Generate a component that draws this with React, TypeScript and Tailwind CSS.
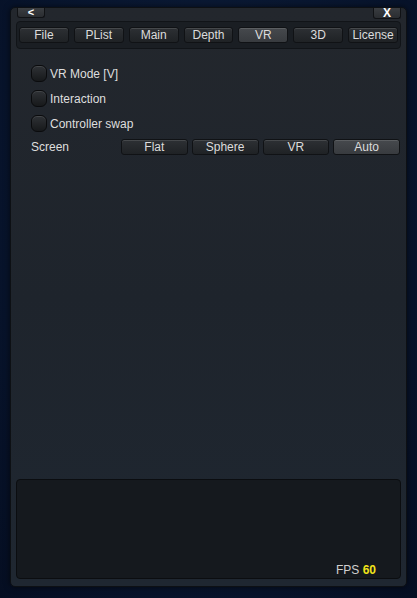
import React from 'react';

const tabs = ['File', 'PList', 'Main', 'Depth', 'VR', '3D', 'License'];
const screens = ['Flat', 'Sphere', 'VR', 'Auto'];
const toggles = ['VR Mode [V]', 'Interaction', 'Controller swap'];

function Btn({ label, active, className = '' }: { label: string; active?: boolean; className?: string }) {
    return (
        <div
            className={`flex items-center justify-center rounded-[3px] border border-[#101215] text-[12px] leading-none text-[#dcdcdc] shadow-[inset_0_1px_0_rgba(255,255,255,0.12)] ${
                active
                    ? 'bg-gradient-to-b from-[#46494d] to-[#383b3f]'
                    : 'bg-gradient-to-b from-[#2d3034] to-[#1f2225]'
            } ${className}`}
        >
            {label}
        </div>
    );
}

export default function App() {
    return (
        <div className="w-[417px] h-[598px] overflow-hidden bg-[radial-gradient(ellipse_at_50%_30%,#0c1c38_0%,#08152e_60%,#050e22_100%)] pt-[7px] pl-[10px] font-['Liberation_Sans',Arial,sans-serif]">
            <div className="w-[397px] h-[580px] flex flex-col rounded-[5px] border border-[#0d1014] bg-gradient-to-b from-[#23272d] via-[#1e242c] to-[#1f2731] shadow-[0_0_6px_rgba(0,0,0,0.6)]">
                {/* header */}
                <div className="flex justify-between h-[13px] pl-[6px] pr-[5px]">
                    <div className="w-[28px] h-[10px] flex items-center justify-center rounded-b-[3px] border border-t-0 border-[#101215] bg-gradient-to-b from-[#3a3d41] to-[#2a2d31] text-[11px] font-bold leading-none text-white">
                        &lt;
                    </div>
                    <div className="w-[28px] h-[11px] flex items-center justify-center rounded-b-[3px] border border-t-0 border-[#101215] bg-gradient-to-b from-[#3a3d41] to-[#2a2d31] text-[12px] font-bold leading-none text-white">
                        X
                    </div>
                </div>

                {/* tab bar */}
                <div className="mx-[5px] h-[28px] flex gap-[5px] items-start pt-[5px] px-[2px] rounded-[4px] border border-[#111418] bg-[#1a1e23]">
                    {tabs.map((t) => (
                        <Btn key={t} label={t} active={t === 'VR'} className="w-[50px] h-[16px]" />
                    ))}
                </div>

                {/* options */}
                <div className="flex flex-col pl-[20px] pr-[6px] pt-[12px]">
                    {toggles.map((t) => (
                        <div key={t} className="flex items-center h-[25px]">
                            <div className="w-[16px] h-[17px] rounded-[6px] border border-[#0a0b0d] bg-gradient-to-b from-[#2f3236] to-[#17191b] shadow-[inset_0_1px_0_rgba(255,255,255,0.1)]" />
                            <span className="ml-[3px] text-[12px] text-[#dedede]">{t}</span>
                        </div>
                    ))}
                    <div className="flex items-center h-[22px]">
                        <span className="w-[90px] text-[12px] text-[#dedede]">Screen</span>
                        <div className="flex-1 grid grid-cols-4 gap-[4px]">
                            {screens.map((s) => (
                                <Btn key={s} label={s} active={s === 'Auto'} className="h-[16px]" />
                            ))}
                        </div>
                    </div>
                </div>

                <div className="flex-1" />

                {/* log area */}
                <div className="mx-[5px] mb-[7px] h-[100px] flex flex-col justify-end rounded-[4px] border border-[#0b0d10] bg-[#15191e] pr-[24px] pb-[1px]">
                    <div className="self-end text-[12px] leading-[14px] text-[#d0d0d0]">
                        FPS <span className="font-bold text-[#f2e41a]">60</span>
                    </div>
                </div>
            </div>
        </div>
    );
}
